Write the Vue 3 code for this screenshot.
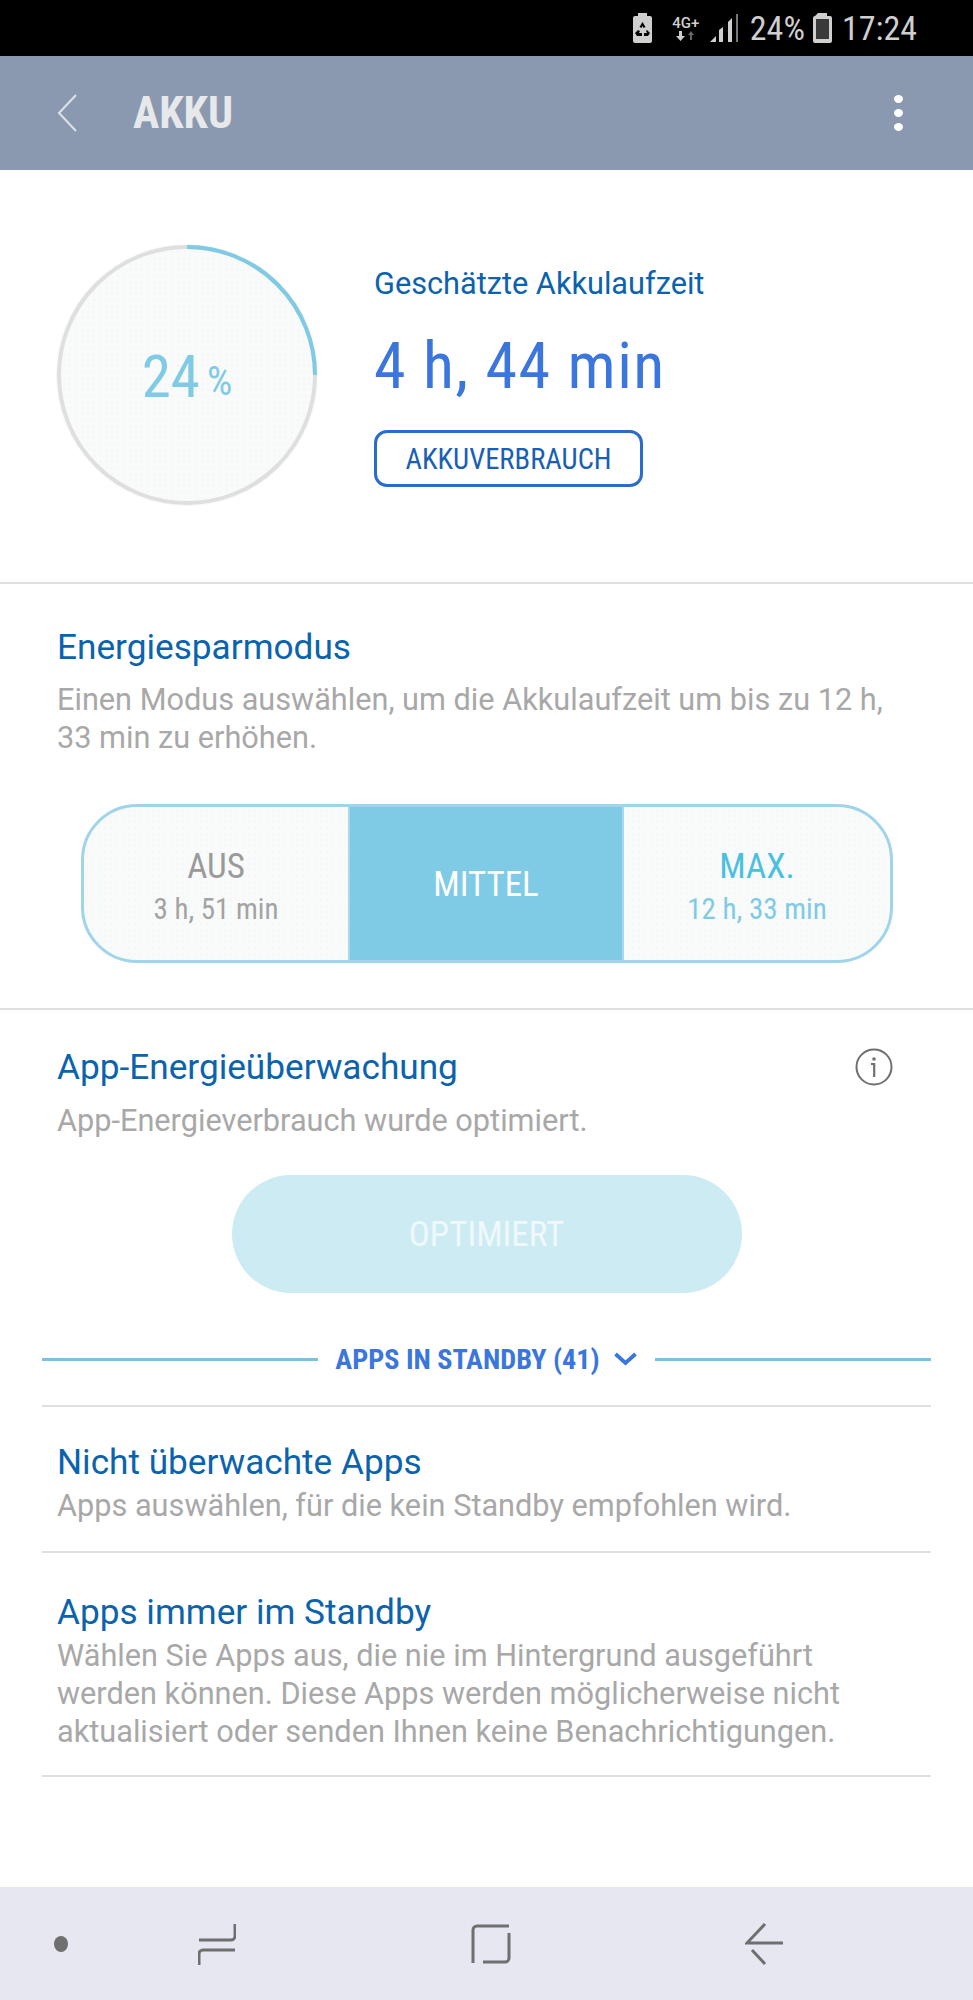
<template>
  <div class="page">
    <div class="status">
      <svg class="ic-saver" width="19" height="30" viewBox="0 0 19 30">
        <path d="M5 0h9v3h3a2 2 0 0 1 2 2v23a2 2 0 0 1-2 2H2a2 2 0 0 1-2-2V5a2 2 0 0 1 2-2h3z" fill="#cfcfcf" />
        <path d="M9.5 9l3 5-2 1-1-2-1 2-2-1zM5 17l2 1-1 2h3v3H4l-2-3zM14 17l3 3-2 3h-4v-3h3l-1-2z" fill="#000" />
      </svg>
      <div class="net">
        <span class="net-label">4G+</span>
        <svg width="20" height="10" viewBox="0 0 20 10">
          <path d="M3 0h3v5h3L4.5 10 0 5h3z" fill="#cfcfcf" />
          <path d="M15 0l3 4h-2v5h-2V4h-2z" fill="#666" />
        </svg>
      </div>
      <svg class="ic-signal" width="29" height="30" viewBox="0 0 29 30">
        <path d="M0 29l6-6v6z" fill="#cfcfcf" />
        <path d="M9 29V17l4-3v15zM18 29V9l4-4v24z" fill="#cfcfcf" />
        <path d="M26 29V1h2v28z" fill="#777" />
      </svg>
      <span class="st-text pct">24%</span>
      <svg class="ic-batt" width="19" height="30" viewBox="0 0 19 30">
        <path d="M5 0h9v3h3a2 2 0 0 1 2 2v23a2 2 0 0 1-2 2H2a2 2 0 0 1-2-2V5a2 2 0 0 1 2-2z" fill="#cfcfcf" />
        <rect x="3" y="6" width="13" height="20" fill="#3a3a3a" />
      </svg>
      <span class="st-text time">17:24</span>
    </div>

    <div class="appbar">
      <svg class="back" width="22" height="40" viewBox="0 0 22 40">
        <path d="M20 2L3 20l17 18" fill="none" stroke="#dfe2e6" stroke-width="2" />
      </svg>
      <span class="title">AKKU</span>
      <div class="more"><i></i><i></i><i></i></div>
    </div>

    <div class="content">
      <section class="summary">
        <div class="gauge">
          <svg width="262" height="262" viewBox="0 0 262 262">
            <defs>
              <pattern id="dots" width="6" height="6" patternUnits="userSpaceOnUse">
                <rect width="6" height="6" fill="#f9fbfb" />
                <circle cx="2" cy="2" r="0.7" fill="#eef2f2" />
              </pattern>
            </defs>
            <circle cx="131" cy="131" r="130.5" fill="none" stroke="#f6f8f8" stroke-width="1" />
            <circle cx="131" cy="131" r="128" fill="url(#dots)" stroke="#dfdfe0" stroke-width="4" />
            <path d="M131 3A128 128 0 0 1 259 131" fill="none" stroke="#7fcae4" stroke-width="4" />
          </svg>
          <div class="gauge-label"><span class="gauge-num">24</span><span class="gauge-pct">%</span></div>
        </div>
        <div class="estimate">
          <div class="est-label">Geschätzte Akkulaufzeit</div>
          <div class="est-value">4 h, 44 min</div>
          <button class="usage">AKKUVERBRAUCH</button>
        </div>
      </section>

      <section class="power">
        <h2>Energiesparmodus</h2>
        <p>Einen Modus auswählen, um die Akkulaufzeit um bis zu 12 h, 33 min zu erhöhen.</p>
        <div class="modes">
          <div
            v-for="m in modes"
            :key="m.name"
            class="mode"
            :class="m.cls"
          >
            <span class="mode-name">{{ m.name }}</span>
            <span v-if="m.time" class="mode-time">{{ m.time }}</span>
          </div>
        </div>
      </section>

      <section class="monitor">
        <div class="monitor-head">
          <h2>App-Energieüberwachung</h2>
          <svg width="38" height="38" viewBox="0 0 38 38">
            <circle cx="19" cy="19" r="17.5" fill="none" stroke="#6f6f6f" stroke-width="2" />
            <circle cx="19" cy="11" r="1.8" fill="#6f6f6f" />
            <path d="M16 16h3.2v13" fill="none" stroke="#6f6f6f" stroke-width="2.2" />
          </svg>
        </div>
        <p>App-Energieverbrauch wurde optimiert.</p>
        <button class="optimize">OPTIMIERT</button>
        <div class="standby">
          <span class="standby-line"></span>
          <span class="standby-text">APPS IN STANDBY (41)</span>
          <svg width="23" height="14" viewBox="0 0 23 14">
            <path d="M1.5 2l10 9 10-9" fill="none" stroke="#3b76dc" stroke-width="3.8" />
          </svg>
          <span class="standby-line"></span>
        </div>
        <div class="item" v-for="it in items" :key="it.title">
          <h2>{{ it.title }}</h2>
          <p>{{ it.text }}</p>
        </div>
      </section>
    </div>

    <div class="navbar">
      <span class="dot"></span>
      <svg class="nav-recent" width="38" height="42" viewBox="0 0 38 42">
        <path d="M37 1v12a4 4 0 0 1-4 4H1M37 27H5a4 4 0 0 0-4 4v11" fill="none" stroke="#6f6f6f" stroke-width="3" />
      </svg>
      <svg class="nav-home" width="40" height="40" viewBox="0 0 40 40">
        <path d="M2 39V6a4 4 0 0 1 4-4h32M38 9v25a4 4 0 0 1-4 4H12" fill="none" stroke="#6f6f6f" stroke-width="3" />
      </svg>
      <svg class="nav-back" width="38" height="42" viewBox="0 0 38 42">
        <path d="M20 1L2 20h36M7 27l13 14" fill="none" stroke="#6f6f6f" stroke-width="3" />
      </svg>
    </div>
  </div>
</template>

<script setup>
const modes = [
  { name: "AUS", time: "3 h, 51 min", cls: "off" },
  { name: "MITTEL", time: "", cls: "active" },
  { name: "MAX.", time: "12 h, 33 min", cls: "max" },
];

const items = [
  {
    title: "Nicht überwachte Apps",
    text: "Apps auswählen, für die kein Standby empfohlen wird.",
  },
  {
    title: "Apps immer im Standby",
    text: "Wählen Sie Apps aus, die nie im Hintergrund ausgeführt werden können. Diese Apps werden möglicherweise nicht aktualisiert oder senden Ihnen keine Benachrichtigungen.",
  },
];
</script>

<style>
body {
  margin: 0;
  background: #fff;
}
</style>

<style scoped>
.page {
  width: 973px;
  height: 2000px;
  display: flex;
  flex-direction: column;
  font-family: Roboto, "Liberation Sans", sans-serif;
  background: #fff;
}

.status {
  height: 56px;
  background: #000;
  display: flex;
  align-items: center;
  justify-content: flex-end;
  padding-right: 56px;
  box-sizing: border-box;
  font-stretch: 85%;
}
.ic-saver { margin-right: 18px; }
.net {
  width: 32px;
  display: flex;
  flex-direction: column;
  align-items: center;
  margin-right: 8px;
}
.net-label {
  color: #cfcfcf;
  font-size: 15px;
  font-weight: 500;
  line-height: 15px;
  font-stretch: 100%;
}
.ic-signal { margin-right: 11px; }
.st-text {
  color: #cfcfcf;
  font-size: 34px;
  line-height: 40px;
}
.pct { margin-right: 8px; }
.ic-batt { margin-right: 10px; }

.appbar {
  height: 114px;
  background: #8a99b0;
  display: flex;
  align-items: center;
  padding: 0 70px 0 56px;
  flex: none;
}
.title {
  margin-left: 55px;
  color: #e6e8ea;
  font-size: 44px;
  font-weight: 700;
  font-stretch: 78%;
}
.more {
  margin-left: auto;
  display: flex;
  flex-direction: column;
  gap: 6px;
}
.more i {
  width: 9px;
  height: 8px;
  border-radius: 50%;
  background: #fff;
}

.content {
  flex: 1;
}

.summary {
  height: 414px;
  box-sizing: border-box;
  padding: 74px 0 0 56px;
  display: flex;
  border-bottom: 2px solid #dfdfdf;
}
.gauge {
  position: relative;
  width: 262px;
  height: 262px;
  flex: none;
}
.gauge-label {
  position: absolute;
  inset: 0;
  padding-top: 3px;
  display: flex;
  align-items: center;
  justify-content: center;
  color: #7fcae4;
  font-stretch: 80%;
}
.gauge-num { font-size: 59px; }
.gauge-pct { font-size: 40px; margin-left: 7px; margin-top: 10px; }
.estimate {
  margin-left: 56px;
  padding-top: 20px;
}
.est-label {
  color: #0b63ad;
  font-size: 30.7px;
  line-height: 40px;
}
.est-value {
  margin-top: 25px;
  color: #3b76dc;
  font-size: 64px;
  line-height: 76px;
  font-stretch: 80%;
  letter-spacing: 1.4px;
}
.usage {
  display: block;
  margin-top: 25px;
  width: 269px;
  height: 57px;
  background: #fff;
  border: 3px solid #2a6ccb;
  border-radius: 13px;
  color: #1a5fb4;
  font-family: inherit;
  font-stretch: 80%;
  font-size: 28.6px;
  padding: 0;
}

h2 {
  margin: 0;
  color: #0b63ad;
  font-size: 35.2px;
  font-weight: 400;
  line-height: 46px;
}
p {
  margin: 0;
  max-width: 840px;
  color: #a8a8a8;
  font-size: 30.7px;
  line-height: 38px;
}

.power {
  height: 426px;
  box-sizing: border-box;
  padding: 40px 56px 0 57px;
  border-bottom: 2px solid #dfdfdf;
}
.power p { margin-top: 11px; }
.modes {
  display: flex;
  margin: 47px -32px 0 24px;
  width: 812px;
  height: 159px;
  border: 3px solid #9fd4ea;
  border-radius: 56px;
  overflow: hidden;
  box-sizing: border-box;
  background-color: #f9fbfb;
  background-image: radial-gradient(#eef2f2 0.6px, transparent 0.8px);
  background-size: 6px 6px;
  font-stretch: 80%;
}
.mode {
  display: flex;
  flex-direction: column;
  align-items: center;
  justify-content: center;
  box-sizing: border-box;
  padding-top: 3px;
}
.off { width: 264px; }
.active {
  width: 276px;
  background: #7fcae4;
  border-left: 2px solid #a6d9ec;
  border-right: 2px solid #a6d9ec;
}
.max { flex: 1; }
.mode-name {
  font-size: 35px;
  line-height: 48px;
}
.mode-time {
  font-size: 29px;
  line-height: 36px;
}
.off .mode-name { color: #9a9a9a; }
.off .mode-time { color: #a3a3a3; }
.active .mode-name { color: #fff; }
.max .mode-name { color: #4bbfe0; }
.max .mode-time { color: #7fcae4; }

.monitor {
  padding: 0 42px 0 42px;
}
.monitor-head {
  display: flex;
  justify-content: space-between;
  align-items: center;
  padding: 34px 38px 0 15px;
}
.monitor > p {
  margin: 12px 0 0 15px;
}
.optimize {
  display: block;
  margin: 35px auto 0;
  width: 510px;
  height: 118px;
  border: 0;
  border-radius: 59px;
  background: #cdebf3;
  color: #eff9fc;
  font-family: inherit;
  font-stretch: 80%;
  font-size: 35px;
  padding: 0;
}
.standby {
  display: flex;
  align-items: center;
  margin-top: 47px;
  margin-bottom: 27px;
  height: 38px;
}
.standby-line {
  flex: 1;
  height: 3px;
  background: #7fbfe2;
}
.standby-text {
  margin: 0 14px 0 17px;
  color: #3b76dc;
  font-size: 28.2px;
  font-weight: 700;
  font-stretch: 80%;
}
.standby svg { margin-right: 18px; }
.item {
  border-top: 2px solid #dfdfdf;
  padding: 32px 15px 26px;
}
.item:last-child {
  padding-top: 36px;
  padding-bottom: 24px;
  border-bottom: 2px solid #dfdfdf;
}
.item p { line-height: 38px; margin-top: 2px; }

.navbar {
  position: relative;
  height: 113px;
  flex: none;
  display: flex;
  align-items: center;
  background-color: #e6e7f0;
  background-image: radial-gradient(#e2e3ed 0.6px, transparent 0.8px);
  background-size: 6px 6px;
}
.dot {
  width: 14px;
  height: 16px;
  border-radius: 50%;
  background: #6f6f6f;
  margin-left: 54px;
}
.nav-recent { margin-left: 130px; }
.nav-home { margin-left: 235px; }
.nav-back { margin-left: 234px; }
</style>
